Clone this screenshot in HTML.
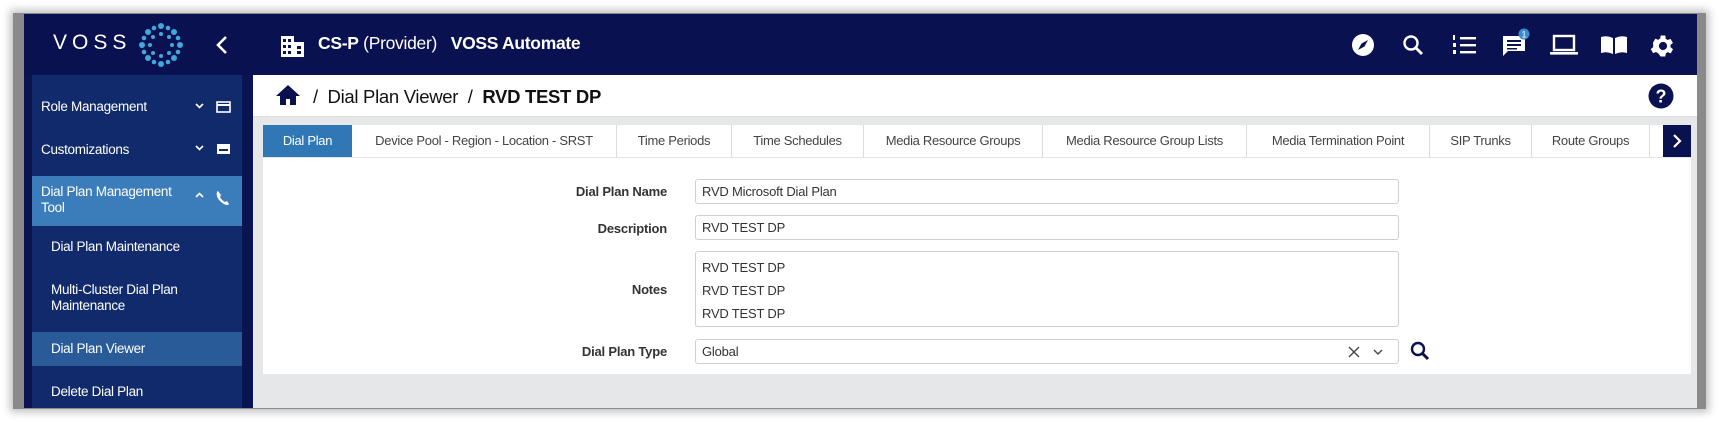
<!DOCTYPE html>
<html><head><meta charset="utf-8"><style>
*{box-sizing:border-box;margin:0;padding:0}
body{width:1724px;height:422px;background:#fff;position:relative;overflow:hidden;font-family:"Liberation Sans",sans-serif;}
.a{position:absolute}
.frame{left:13px;top:13px;width:1693px;height:396px;background:#8a8a8a;box-shadow:0 0 8px 3px rgba(0,0,0,.25)}
.hdr{left:24px;top:14px;width:1673px;height:61px;background:#0a1150;color:#fff}
.side{left:24px;top:75px;width:229px;height:333px;background:#0b1452}
.sidein{left:32px;top:75px;width:210px;height:333px;background:#102a6c}
.content{left:253px;top:75px;width:1444px;height:333px;background:#e6e7e9}
.si{color:#fff;font-size:13.5px;letter-spacing:-0.3px;position:absolute}
.tab{position:absolute;top:125px;height:32px;line-height:32px;font-size:13px;letter-spacing:-0.3px;color:#444;text-align:center;border-right:1px solid #ddd;background:#fff;white-space:nowrap}
.lbl{position:absolute;right:1057px;font-size:13px;letter-spacing:-0.2px;font-weight:bold;color:#333}
.inp{position:absolute;left:695px;width:704px;border:1px solid #cfcfcf;border-radius:3px;background:#fff;font-size:13px;letter-spacing:-0.2px;color:#333;padding-left:6px}
</style></head><body>
<div class="a frame"></div>
<div class="a hdr">
  <div class="a" style="left:29px;top:17px;font-size:21px;letter-spacing:5px">VOSS</div>
  <svg class="a" style="left:113px;top:7px" width="48" height="48" viewBox="-24 -24 48 48">
    <g fill="#3fa9dc">
      <circle r="3" cx="0" cy="-19"/><circle r="3" cx="13" cy="-13"/><circle r="3" cx="19" cy="0"/><circle r="3" cx="13" cy="13"/><circle r="3" cx="0" cy="19"/><circle r="3" cx="-13" cy="13"/><circle r="3" cx="-19" cy="0"/><circle r="3" cx="-13" cy="-13"/>
      <circle r="2.3" cx="7" cy="-17"/><circle r="2.3" cx="17" cy="-7"/><circle r="2.3" cx="17" cy="7"/><circle r="2.3" cx="7" cy="17"/><circle r="2.3" cx="-7" cy="17"/><circle r="2.3" cx="-17" cy="7"/><circle r="2.3" cx="-17" cy="-7"/><circle r="2.3" cx="-7" cy="-17"/>
      <circle r="2" cx="0" cy="-11"/><circle r="2" cx="11" cy="0"/><circle r="2" cx="0" cy="11"/><circle r="2" cx="-11" cy="0"/><circle r="2" cx="8" cy="-8"/><circle r="2" cx="8" cy="8"/><circle r="2" cx="-8" cy="8"/><circle r="2" cx="-8" cy="-8"/>
    </g></svg>
  <svg class="a" style="left:191px;top:21px" width="14" height="20" viewBox="0 0 14 20"><path d="M11 2 L3 10 L11 18" stroke="#fff" stroke-width="2.6" fill="none"/></svg>
  <svg class="a" style="left:256px;top:20px" width="25" height="23" viewBox="0 0 25 23"><path d="M1 2h13v21H1z M14 8h10v15H14z" fill="#fff"/><g fill="#0a1150"><rect x="3" y="5" width="3" height="3"/><rect x="8" y="5" width="3" height="3"/><rect x="3" y="11" width="3" height="3"/><rect x="8" y="11" width="3" height="3"/><rect x="3" y="17" width="3" height="3"/><rect x="8" y="17" width="3" height="3"/><rect x="17" y="12" width="4" height="3"/><rect x="17" y="17" width="4" height="3"/></g></svg>
  <div class="a" style="left:294px;top:19px;font-size:17.5px;letter-spacing:-0.3px;white-space:nowrap"><b>CS-P</b> (Provider) &nbsp;&nbsp;<b>VOSS Automate</b></div>
  <svg class="a" style="left:1327px;top:19px" width="24" height="24" viewBox="0 0 24 24"><circle cx="12" cy="12" r="11" fill="#fff"/><path d="M17 7 L13.5 13.5 L7 17 L10.5 10.5Z" fill="#0a1150"/></svg>
  <svg class="a" style="left:1377px;top:19px" width="24" height="24" viewBox="0 0 24 24"><circle cx="10" cy="10" r="6.5" stroke="#fff" stroke-width="2.4" fill="none"/><path d="M15 15 L21 21" stroke="#fff" stroke-width="2.8"/></svg>
  <svg class="a" style="left:1427px;top:19px" width="26" height="24" viewBox="0 0 26 24"><g fill="#fff"><rect x="9" y="4" width="16" height="2.4"/><rect x="9" y="11" width="16" height="2.4"/><rect x="9" y="18" width="16" height="2.4"/><rect x="2" y="2" width="2" height="5"/><rect x="2" y="10" width="3" height="4"/><rect x="2" y="17" width="3" height="4"/></g></svg>
  <svg class="a" style="left:1477px;top:14px" width="30" height="30" viewBox="0 0 30 30"><path d="M2 8h22v15H7l-5 5z" fill="#fff"/><g fill="#0a1150"><rect x="6" y="12" width="14" height="2"/><rect x="6" y="16" width="14" height="2"/><rect x="6" y="20" width="10" height="1.5"/></g><circle cx="23" cy="6" r="5.5" fill="#3a8ad0"/><text x="23" y="9.5" font-size="9" fill="#fff" text-anchor="middle" font-family="Liberation Sans">1</text></svg>
  <svg class="a" style="left:1525px;top:20px" width="30" height="22" viewBox="0 0 30 22"><rect x="5" y="2" width="20" height="14" stroke="#fff" stroke-width="2.4" fill="none"/><rect x="1" y="18" width="28" height="2.6" fill="#fff"/></svg>
  <svg class="a" style="left:1575px;top:20px" width="30" height="22" viewBox="0 0 30 22"><path d="M2 3 Q8 1 14 4 V20 Q8 17 2 19Z M16 4 Q22 1 28 3 V19 Q22 17 16 20Z" fill="#fff"/></svg>
  <svg class="a" style="left:1625px;top:18px" width="28" height="28" viewBox="0 0 24 24"><path fill="#fff" d="M19.4 13a7.5 7.5 0 0 0 0-2l2.1-1.6-2-3.5-2.5 1a7.6 7.6 0 0 0-1.7-1L15 3h-4l-.4 2.7a7.6 7.6 0 0 0-1.7 1l-2.5-1-2 3.5L4.6 11a7.5 7.5 0 0 0 0 2l-2.1 1.6 2 3.5 2.5-1a7.6 7.6 0 0 0 1.7 1L11 21h4l.4-2.7a7.6 7.6 0 0 0 1.7-1l2.5 1 2-3.5zM13 15.5a3.5 3.5 0 1 1 0-7 3.5 3.5 0 0 1 0 7z" transform="translate(-1 0)"/></svg>
</div>
<div class="a side"></div>
<div class="a sidein"></div>
<div class="a" style="left:32px;top:176px;width:210px;height:50px;background:#3b7cbb"></div>
<div class="a" style="left:32px;top:332px;width:210px;height:34px;background:#2a5b99"></div>
<div class="si" style="left:41px;top:99px">Role Management</div>
<div class="si" style="left:41px;top:142px">Customizations</div>
<div class="si" style="left:41px;top:184px;line-height:16px">Dial Plan Management<br>Tool</div>
<div class="si" style="left:51px;top:239px">Dial Plan Maintenance</div>
<div class="si" style="left:51px;top:282px;line-height:16px">Multi-Cluster Dial Plan<br>Maintenance</div>
<div class="si" style="left:51px;top:341px">Dial Plan Viewer</div>
<div class="si" style="left:51px;top:384px">Delete Dial Plan</div>
<svg class="a" style="left:194px;top:101px" width="40" height="60" viewBox="0 0 40 60"><path d="M2 3l3.5 3.5L9 3" stroke="#fff" stroke-width="1.6" fill="none"/><rect x="23" y="1" width="13" height="10" stroke="#fff" stroke-width="1.6" fill="none"/><rect x="23" y="3" width="13" height="2" fill="#fff"/><path d="M2 45l3.5 3.5L9 45" stroke="#fff" stroke-width="1.6" fill="none"/><rect x="23" y="43" width="13" height="10" fill="#fff"/><rect x="25" y="48" width="9" height="2" fill="#102a6c"/></svg>
<svg class="a" style="left:194px;top:190px" width="40" height="20" viewBox="0 0 40 20"><path d="M2 7l3.5-3.5L9 7" stroke="#fff" stroke-width="1.6" fill="none"/><path d="M24 1c-2 1-2 6 2 10s8 5 9 3l-2-3-2 1c-2-1-4-3-5-5l1-2z" fill="#fff"/></svg>
<div class="a content"></div>
<div class="a" style="left:253px;top:75px;width:1444px;height:42px;background:#fff;border-bottom:1px solid #ddd"></div>
<svg class="a" style="left:275px;top:84px" width="26" height="22" viewBox="0 0 26 22"><path d="M13 1L1 12h4v9h6v-6h4v6h6v-9h4z" fill="#0a1150"/></svg>
<div class="a" style="left:313px;top:86px;font-size:18.5px;letter-spacing:-0.3px;color:#111;white-space:nowrap">/ &nbsp;Dial Plan Viewer &nbsp;/ &nbsp;<b>RVD TEST DP</b></div>
<svg class="a" style="left:1648px;top:83px" width="26" height="26" viewBox="0 0 26 26"><circle cx="13" cy="13" r="12.5" fill="#0a1150"/><text x="13" y="19.5" font-size="18" font-weight="bold" fill="#fff" text-anchor="middle" font-family="Liberation Sans">?</text></svg>
<div class="a" style="left:263px;top:125px;width:1428px;height:249px;background:#fff"></div>
<div class="tab" style="left:263px;width:89px;background:#2f78b5;color:#fff;border:none">Dial Plan</div>
<div class="tab" style="left:352px;width:265px">Device Pool - Region - Location - SRST</div>
<div class="tab" style="left:617px;width:115px">Time Periods</div>
<div class="tab" style="left:732px;width:132px">Time Schedules</div>
<div class="tab" style="left:864px;width:179px">Media Resource Groups</div>
<div class="tab" style="left:1043px;width:204px">Media Resource Group Lists</div>
<div class="tab" style="left:1247px;width:183px">Media Termination Point</div>
<div class="tab" style="left:1430px;width:102px">SIP Trunks</div>
<div class="tab" style="left:1532px;width:118px">Route Groups</div>
<div class="a" style="left:1663px;top:125px;width:28px;height:32px;background:#0a1150"></div>
<svg class="a" style="left:1671px;top:133px" width="12" height="16" viewBox="0 0 12 16"><path d="M3 2l6 6-6 6" stroke="#fff" stroke-width="2.2" fill="none"/></svg>
<div class="a" style="left:263px;top:157px;width:1428px;height:1px;background:#e4e4e4"></div>
<div class="lbl" style="top:184px">Dial Plan Name</div>
<div class="lbl" style="top:221px">Description</div>
<div class="lbl" style="top:282px">Notes</div>
<div class="lbl" style="top:344px">Dial Plan Type</div>
<div class="inp" style="top:179px;height:25px;line-height:23px">RVD Microsoft Dial Plan</div>
<div class="inp" style="top:215px;height:25px;line-height:23px">RVD TEST DP</div>
<div class="inp" style="top:251px;height:76px;padding-top:4px;line-height:23px">RVD TEST DP<br>RVD TEST DP<br>RVD TEST DP</div>
<div class="inp" style="top:339px;height:25px;line-height:23px">Global
  <svg class="a" style="right:12px;top:6px" width="38" height="12" viewBox="0 0 38 12"><path d="M1 1l10 10M11 1L1 11" stroke="#444" stroke-width="1.4"/><path d="M26 4l4 4 4-4" stroke="#444" stroke-width="1.4" fill="none"/></svg></div>
<svg class="a" style="left:1409px;top:340px" width="22" height="22" viewBox="0 0 22 22"><circle cx="9" cy="9" r="6" stroke="#0a1150" stroke-width="2.4" fill="none"/><path d="M13.5 13.5L19 19" stroke="#0a1150" stroke-width="3"/></svg>
</body></html>
